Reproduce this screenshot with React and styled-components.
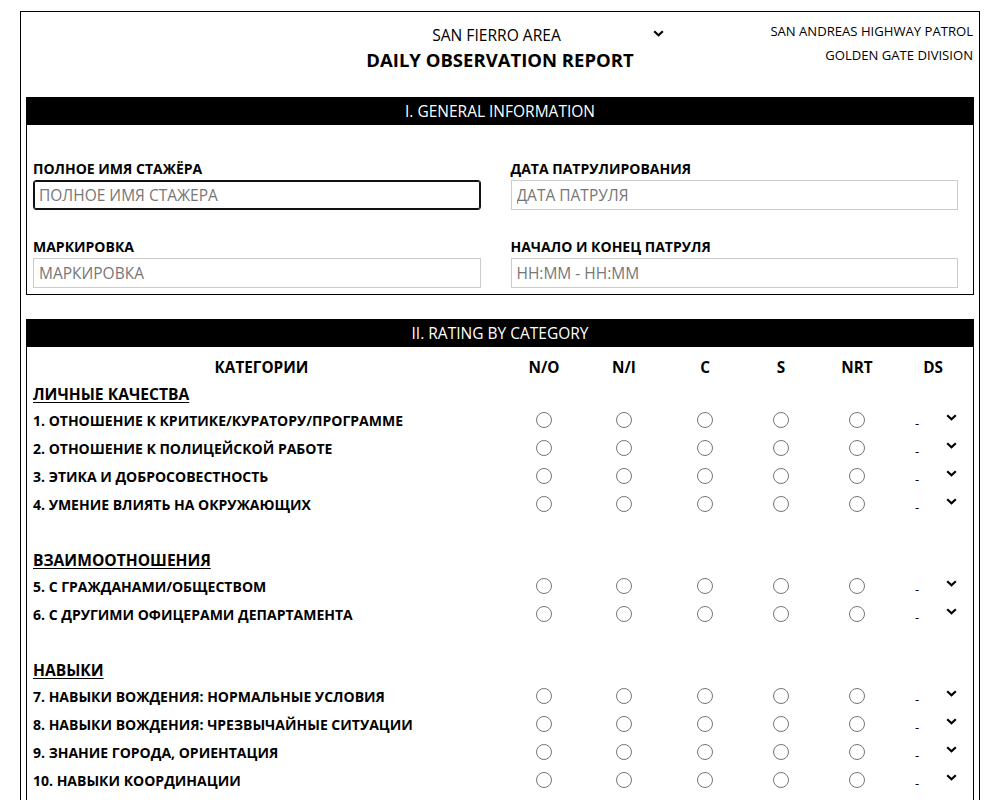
import React from "react";
import styled, { createGlobalStyle } from "styled-components";

const Global = createGlobalStyle`
  html, body { margin: 0; padding: 0; background: #fff; }
  body { font-family: "Open Sans", "Noto Sans", sans-serif; color: #000; }
  * { box-sizing: border-box; }
`;

const Page = styled.div`
  padding: 11px 20px 20px 20px;
`;

const Sheet = styled.div`
  border: 1px solid #000;
  padding: 0 5px 5px 5px;
`;

const Header = styled.header`
  display: grid;
  grid-template-columns: 1fr auto 1fr;
  align-items: start;
  margin-bottom: 25px;
`;

const HeaderCenter = styled.div`
  grid-column: 2;
  display: flex;
  flex-direction: column;
  align-items: center;
  padding-top: 10px;
`;

const AreaSelect = styled.div`
  display: flex;
  align-items: center;
  height: 26px;
`;

const SelectText = styled.span`
  width: 320px;
  text-align: center;
  font-size: 15.6px;
  line-height: 26px;
`;

const Title = styled.h1`
  margin: 0;
  font-size: 18.5px;
  font-weight: 700;
  line-height: 24px;
`;

const Agency = styled.div`
  grid-column: 3;
  justify-self: end;
  text-align: right;
  font-size: 13.1px;
  line-height: 24px;
  padding-top: 7px;
  padding-right: 1px;
`;

const Chevron = ({ className }) => (
  <svg className={className} width="11" height="7" viewBox="0 0 11 7">
    <path d="M1.2 1.2 L5.5 5.2 L9.8 1.2" fill="none" stroke="#000" strokeWidth="2.2" />
  </svg>
);

const AreaChevron = styled(Chevron)`
  margin-left: -4px;
  margin-bottom: 4px;
`;

const Panel = styled.section`
  border: 1px solid #000;
  margin-bottom: ${(p) => p.$gap || 0}px;
`;

const PanelTitle = styled.div`
  background: #000;
  color: #fff;
  height: 28px;
  margin: -1px -1px 0 -1px;
  display: flex;
  align-items: center;
  justify-content: center;
  font-size: 15.5px;
`;

const FieldGrid = styled.div`
  display: grid;
  grid-template-columns: 1fr 1fr;
  column-gap: 30px;
  row-gap: 28px;
  padding: 35px 15px 6px 6px;
`;

const Field = styled.label`
  display: flex;
  flex-direction: column;
  gap: 2px;
`;

const FieldLabel = styled.span`
  font-size: 14px;
  font-weight: 700;
  line-height: 18px;
`;

const TextInput = styled.input`
  height: 30px;
  width: 100%;
  border: 1px solid #ccc;
  border-radius: ${(p) => (p.$focused ? 3 : 0)}px;
  box-shadow: ${(p) => (p.$focused ? "inset 0 0 0 1px #111" : "none")};
  border-color: ${(p) => (p.$focused ? "#111" : "#ccc")};
  padding: 0 5px;
  font-family: inherit;
  font-size: 15.5px;
  outline: none;
  &::placeholder { color: #777; }
`;

const RatingTable = styled.div`
  padding: 5px 2px 14px 6px;
`;

const cols = "1fr 74px 86px 76px 76px 76px 76px";

const HeadRow = styled.div`
  display: grid;
  grid-template-columns: ${cols};
  height: 30px;
  align-items: center;
  font-size: 15.3px;
  font-weight: 700;
`;

const HeadCell = styled.div`
  text-align: center;
  padding-right: ${(p) => p.$pr || 0}px;
`;

const GroupTitle = styled.div`
  height: 24px;
  display: flex;
  align-items: center;
  font-size: 15.6px;
  font-weight: 700;
  text-decoration: underline;
  text-underline-offset: 2px;
  margin-top: ${(p) => (p.$first ? 0 : 30)}px;
`;

const ItemRow = styled.div`
  display: grid;
  grid-template-columns: ${cols};
  height: 28px;
  align-items: center;
`;

const ItemLabel = styled.div`
  font-size: 14px;
  font-weight: 700;
`;

const RadioCell = styled.div`
  display: flex;
  justify-content: center;
  align-items: center;
`;

const Radio = styled.input.attrs({ type: "radio" })`
  margin: 0;
  width: 16px;
  height: 16px;
`;

const DsSelect = styled.div`
  justify-self: center;
  width: 48px;
  display: flex;
  align-items: center;
  justify-content: space-between;
`;

const Dash = styled.span`
  padding-left: 6px;
  font-size: 13px;
  margin-top: 6px;
`;

const DsChevron = styled(Chevron)`
  margin-bottom: 6px;
`;

const groups = [
  {
    title: "ЛИЧНЫЕ КАЧЕСТВА",
    items: [
      "1. ОТНОШЕНИЕ К КРИТИКЕ/КУРАТОРУ/ПРОГРАММЕ",
      "2. ОТНОШЕНИЕ К ПОЛИЦЕЙСКОЙ РАБОТЕ",
      "3. ЭТИКА И ДОБРОСОВЕСТНОСТЬ",
      "4. УМЕНИЕ ВЛИЯТЬ НА ОКРУЖАЮЩИХ",
    ],
  },
  {
    title: "ВЗАИМООТНОШЕНИЯ",
    items: ["5. С ГРАЖДАНАМИ/ОБЩЕСТВОМ", "6. С ДРУГИМИ ОФИЦЕРАМИ ДЕПАРТАМЕНТА"],
  },
  {
    title: "НАВЫКИ",
    items: [
      "7. НАВЫКИ ВОЖДЕНИЯ: НОРМАЛЬНЫЕ УСЛОВИЯ",
      "8. НАВЫКИ ВОЖДЕНИЯ: ЧРЕЗВЫЧАЙНЫЕ СИТУАЦИИ",
      "9. ЗНАНИЕ ГОРОДА, ОРИЕНТАЦИЯ",
      "10. НАВЫКИ КООРДИНАЦИИ",
    ],
  },
];

const ratings = ["N/O", "N/I", "C", "S", "NRT"];

export default function App() {
  return (
    <>
      <Global />
      <Page>
        <Sheet>
          <Header>
            <HeaderCenter>
              <AreaSelect>
                <SelectText>SAN FIERRO AREA</SelectText>
                <AreaChevron />
              </AreaSelect>
              <Title>DAILY OBSERVATION REPORT</Title>
            </HeaderCenter>
            <Agency>
              SAN ANDREAS HIGHWAY PATROL
              <br />
              GOLDEN GATE DIVISION
            </Agency>
          </Header>

          <Panel $gap={24}>
            <PanelTitle>I. GENERAL INFORMATION</PanelTitle>
            <FieldGrid>
              <Field>
                <FieldLabel>ПОЛНОЕ ИМЯ СТАЖЁРА</FieldLabel>
                <TextInput $focused placeholder="ПОЛНОЕ ИМЯ СТАЖЕРА" />
              </Field>
              <Field>
                <FieldLabel>ДАТА ПАТРУЛИРОВАНИЯ</FieldLabel>
                <TextInput placeholder="ДАТА ПАТРУЛЯ" />
              </Field>
              <Field>
                <FieldLabel>МАРКИРОВКА</FieldLabel>
                <TextInput placeholder="МАРКИРОВКА" />
              </Field>
              <Field>
                <FieldLabel>НАЧАЛО И КОНЕЦ ПАТРУЛЯ</FieldLabel>
                <TextInput placeholder="HH:MM - HH:MM" />
              </Field>
            </FieldGrid>
          </Panel>

          <Panel>
            <PanelTitle>II. RATING BY CATEGORY</PanelTitle>
            <RatingTable>
              <HeadRow>
                <HeadCell $pr={17}>КАТЕГОРИИ</HeadCell>
                {ratings.map((r) => (
                  <HeadCell key={r}>{r}</HeadCell>
                ))}
                <HeadCell>DS</HeadCell>
              </HeadRow>
              {groups.map((g, gi) => (
                <React.Fragment key={g.title}>
                  <GroupTitle $first={gi === 0}>{g.title}</GroupTitle>
                  {g.items.map((item, ii) => (
                    <ItemRow key={item}>
                      <ItemLabel>{item}</ItemLabel>
                      {ratings.map((r) => (
                        <RadioCell key={r}>
                          <Radio name={`r-${gi}-${ii}`} />
                        </RadioCell>
                      ))}
                      <DsSelect>
                        <Dash>-</Dash>
                        <DsChevron />
                      </DsSelect>
                    </ItemRow>
                  ))}
                </React.Fragment>
              ))}
            </RatingTable>
          </Panel>
        </Sheet>
      </Page>
    </>
  );
}
